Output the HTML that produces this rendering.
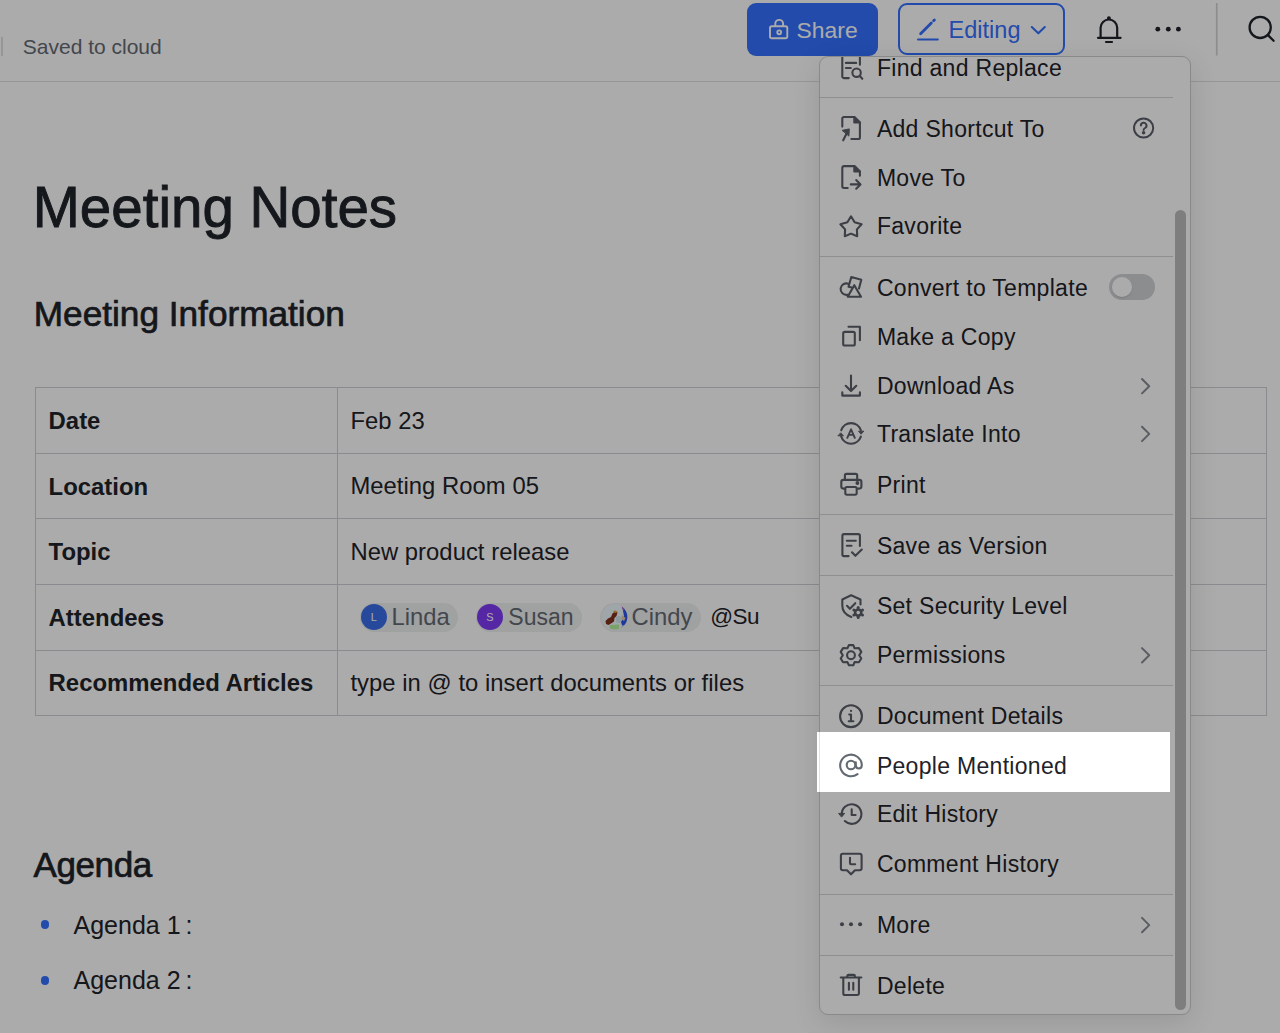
<!DOCTYPE html>
<html><head><meta charset="utf-8"><title>Meeting Notes</title>
<style>
html,body{margin:0;padding:0;width:1280px;height:1033px;overflow:hidden;background:#fff;}
body{position:relative;font-family:"Liberation Sans", sans-serif;}
.t{position:absolute;white-space:nowrap;}
.abs{position:absolute;}
svg{position:absolute;overflow:visible;}
</style></head><body>
<div class="abs" style="left:1px;top:37px;width:1.5px;height:19px;background:#dee0e3"></div>
<div class="t" style="left:22.80px;top:36.45px;font-size:21px;line-height:21px;color:#646a73;font-weight:normal;letter-spacing:0px;-webkit-text-stroke:0px #646a73;">Saved to cloud</div>
<div class="abs" style="left:0;top:80.7px;width:1280px;height:1px;background:#dee0e3"></div>
<div class="abs" style="left:747px;top:3px;width:131px;height:52.5px;border-radius:9px;background:#3370ff"></div>
<svg style="left:0;top:0" width="1280" height="60"><g fill="none" stroke="#fff" stroke-width="1.9">
<rect x="770" y="26.2" width="17.3" height="12.1" rx="1.8"/>
<path d="M775.3 26 V23.8 a3.9 3.9 0 0 1 7.8 0 V26"/>
<circle cx="779.2" cy="32.3" r="1.9"/>
</g></svg>
<div class="t" style="left:796.60px;top:19.04px;font-size:22.9px;line-height:22.9px;color:#fff;font-weight:normal;letter-spacing:0px;-webkit-text-stroke:0px #fff;">Share</div>
<div class="abs" style="left:898px;top:3px;width:166.5px;height:52px;border-radius:9px;border:2px solid #3370ff;box-sizing:border-box"></div>
<svg style="left:0;top:0" width="1280" height="60"><g fill="none" stroke="#3370ff" stroke-linecap="round">
<path d="M918 39.4 H937.8" stroke-width="2"/>
<path d="M920.6 33.8 L931.3 23.1" stroke-width="2.8"/>
<path d="M933.6 20.8 L934.4 20" stroke-width="2.8"/>
<path d="M1031.8 27 L1038.3 33.3 L1044.8 27" stroke-width="2.1" stroke-linejoin="round"/>
</g></svg>
<div class="t" style="left:948.60px;top:19.32px;font-size:23.5px;line-height:23.5px;color:#3370ff;font-weight:normal;letter-spacing:0px;-webkit-text-stroke:0px #3370ff;">Editing</div>
<svg style="left:0;top:0" width="1280" height="60"><g fill="none" stroke="#1f2329" stroke-width="2.2" stroke-linecap="round">
<path d="M1098 37.8 H1120.6"/>
<path d="M1100.6 37.5 V27.8 a8.3 8.3 0 0 1 16.6 0 V37.5"/>
<path d="M1106 42 H1112"/>
<circle cx="1108.9" cy="18.2" r="0.9" fill="#1f2329"/>
</g>
<g fill="#1f2329"><circle cx="1157.8" cy="29.2" r="2.4"/><circle cx="1168.3" cy="29.2" r="2.4"/><circle cx="1178.4" cy="29.2" r="2.4"/></g>
<rect x="1215.9" y="3" width="1.7" height="52.5" fill="#cfd2d6"/>
<g fill="none" stroke="#1f2329" stroke-width="2.3" stroke-linecap="round">
<circle cx="1260.2" cy="27.4" r="10.6"/><path d="M1268.2 35.4 L1273.6 40.8"/></g>
</svg>
<div class="t" style="left:32.80px;top:180.17px;font-size:56.5px;line-height:56.5px;color:#1f2329;font-weight:normal;letter-spacing:0px;-webkit-text-stroke:0.9px #1f2329;">Meeting Notes</div>
<div class="t" style="left:33.80px;top:296.28px;font-size:35.2px;line-height:35.2px;color:#1f2329;font-weight:normal;letter-spacing:0px;-webkit-text-stroke:0.7px #1f2329;">Meeting Information</div>
<div class="abs" style="left:34.5px;top:387.0px;width:1232.1px;height:329.29999999999995px;border:1px solid #cdd0d4;box-sizing:border-box"></div>
<div class="abs" style="left:34.5px;top:452.66px;width:1232.1px;height:1px;background:#cdd0d4"></div>
<div class="abs" style="left:34.5px;top:518.32px;width:1232.1px;height:1px;background:#cdd0d4"></div>
<div class="abs" style="left:34.5px;top:583.98px;width:1232.1px;height:1px;background:#cdd0d4"></div>
<div class="abs" style="left:34.5px;top:649.64px;width:1232.1px;height:1px;background:#cdd0d4"></div>
<div class="abs" style="left:336.6px;top:387.0px;width:1px;height:329.29999999999995px;background:#cdd0d4"></div>
<div class="t" style="left:48.60px;top:409.08px;font-size:23.9px;line-height:23.9px;color:#1f2329;font-weight:bold;letter-spacing:0px;-webkit-text-stroke:0px #1f2329;">Date</div>
<div class="t" style="left:350.40px;top:408.77px;font-size:23.8px;line-height:23.8px;color:#1f2329;font-weight:normal;letter-spacing:0.05px;-webkit-text-stroke:0px #1f2329;">Feb 23</div>
<div class="t" style="left:48.60px;top:474.69px;font-size:23.9px;line-height:23.9px;color:#1f2329;font-weight:bold;letter-spacing:0px;-webkit-text-stroke:0px #1f2329;">Location</div>
<div class="t" style="left:350.40px;top:474.37px;font-size:23.8px;line-height:23.8px;color:#1f2329;font-weight:normal;letter-spacing:0.05px;-webkit-text-stroke:0px #1f2329;">Meeting Room 05</div>
<div class="t" style="left:48.60px;top:540.28px;font-size:23.9px;line-height:23.9px;color:#1f2329;font-weight:bold;letter-spacing:0px;-webkit-text-stroke:0px #1f2329;">Topic</div>
<div class="t" style="left:350.40px;top:539.97px;font-size:23.8px;line-height:23.8px;color:#1f2329;font-weight:normal;letter-spacing:0.05px;-webkit-text-stroke:0px #1f2329;">New product release</div>
<div class="t" style="left:48.60px;top:605.88px;font-size:23.9px;line-height:23.9px;color:#1f2329;font-weight:bold;letter-spacing:0px;-webkit-text-stroke:0px #1f2329;">Attendees</div>
<div class="t" style="left:48.60px;top:671.48px;font-size:23.9px;line-height:23.9px;color:#1f2329;font-weight:bold;letter-spacing:0px;-webkit-text-stroke:0px #1f2329;">Recommended Articles</div>
<div class="t" style="left:350.40px;top:671.17px;font-size:23.8px;line-height:23.8px;color:#1f2329;font-weight:normal;letter-spacing:0.05px;-webkit-text-stroke:0px #1f2329;">type in @ to insert documents or files</div>
<div class="abs" style="left:360.3px;top:603px;width:98.09999999999997px;height:28.6px;border-radius:14.3px;background:#eff0f1"></div>
<div class="abs" style="left:360.9px;top:604.2px;width:26px;height:26px;border-radius:13px;background:#3a6ee8;color:#fff;font-size:11px;line-height:26px;text-align:center;font-family:"Liberation Sans", sans-serif">L</div>
<div class="t" style="left:391.60px;top:605.37px;font-size:23.8px;line-height:23.8px;color:#646a73;font-weight:normal;letter-spacing:0px;-webkit-text-stroke:0px #646a73;">Linda</div>
<div class="abs" style="left:476px;top:603px;width:105.60000000000002px;height:28.6px;border-radius:14.3px;background:#eff0f1"></div>
<div class="abs" style="left:477px;top:604.2px;width:26px;height:26px;border-radius:13px;background:#7f3bf5;color:#fff;font-size:11px;line-height:26px;text-align:center;font-family:"Liberation Sans", sans-serif">S</div>
<div class="t" style="left:508.30px;top:606.05px;font-size:23.0px;line-height:23.0px;color:#646a73;font-weight:normal;letter-spacing:0px;-webkit-text-stroke:0px #646a73;">Susan</div>
<div class="abs" style="left:599.8px;top:603px;width:101.60000000000002px;height:28.6px;border-radius:14.3px;background:#eff0f1"></div>
<div class="t" style="left:631.60px;top:605.37px;font-size:23.8px;line-height:23.8px;color:#646a73;font-weight:normal;letter-spacing:0px;-webkit-text-stroke:0px #646a73;">Cindy</div>
<svg style="left:601.7px;top:603.8px" width="26" height="26" viewBox="0 0 26 26">
<defs><clipPath id="cav"><circle cx="13" cy="13" r="12.4"/></clipPath></defs>
<circle cx="13" cy="13" r="13" fill="#f4f6f8"/>
<g clip-path="url(#cav)">
<rect width="26" height="26" fill="#eef8fc"/>
<path d="M20 2 C24 5 26 9 26 14 C26 19 24 23 21 25 L19 18 L22 12 Z" fill="#2e56e6"/>
<path d="M19.5 2.5 L23 4 L21.5 7 Z" fill="#d64fc0"/>
<path d="M7 26 L8 21 L17 20.5 L17.5 26 Z" fill="#b8f0a0"/>
<rect x="17.5" y="21.5" width="6" height="5" fill="#f2f6f7"/>
<circle cx="20.5" cy="24" r="1.2" fill="#2a3a4a"/>
<path d="M3.5 17 L6 14.5 L9 13 L10.5 9.5 L13 7.5 L15.5 8.5 L14.5 12 L12.5 14 L12 17.5 L9 19.5 L6.5 21 L4 20 Z" fill="#80301c"/>
<path d="M11 7.5 C12 6 14.5 6 15.5 8 L13 9 Z" fill="#e0a845"/>
<path d="M20 11 L23.5 14 L22 17 L19 15 Z" fill="#e9c9a8"/>
<rect x="14" y="12" width="5" height="7" rx="2" fill="#d0e6ee"/>
</g></svg>
<div class="t" style="left:710.30px;top:606.48px;font-size:22.5px;line-height:22.5px;color:#1f2329;font-weight:normal;letter-spacing:-0.6px;-webkit-text-stroke:0px #1f2329;">@Su</div>
<div class="t" style="left:33.50px;top:846.75px;font-size:35px;line-height:35px;color:#1f2329;font-weight:normal;letter-spacing:-0.4px;-webkit-text-stroke:0.7px #1f2329;">Agenda</div>
<div class="abs" style="left:40.80px;top:920.40px;width:8.6px;height:8.6px;border-radius:50%;background:#3370ff"></div>
<div class="abs" style="left:40.80px;top:976.30px;width:8.6px;height:8.6px;border-radius:50%;background:#3370ff"></div>
<div class="t" style="left:73.50px;top:912.55px;font-size:25px;line-height:25px;color:#1f2329;font-weight:normal;letter-spacing:0px;-webkit-text-stroke:0px #1f2329;">Agenda 1<span style='margin-left:5px'>:</span></div>
<div class="t" style="left:73.50px;top:968.45px;font-size:25px;line-height:25px;color:#1f2329;font-weight:normal;letter-spacing:0px;-webkit-text-stroke:0px #1f2329;">Agenda 2<span style='margin-left:5px'>:</span></div>
<div class="abs" style="left:819px;top:56.2px;width:372px;height:958.4px;border:1px solid #c9ccd0;border-radius:9px;background:#fff;box-sizing:border-box;box-shadow:0 8px 28px rgba(31,35,41,0.12);overflow:hidden">
<div id="menuin" class="abs" style="left:-820px;top:-57.2px;width:1280px;height:1033px">
<div class="abs" style="left:819px;top:96.80px;width:354px;height:1px;background:#d2d5d9"></div>
<div class="abs" style="left:819px;top:256.30px;width:354px;height:1px;background:#d2d5d9"></div>
<div class="abs" style="left:819px;top:514.00px;width:354px;height:1px;background:#d2d5d9"></div>
<div class="abs" style="left:819px;top:575.00px;width:354px;height:1px;background:#d2d5d9"></div>
<div class="abs" style="left:819px;top:685.10px;width:354px;height:1px;background:#d2d5d9"></div>
<div class="abs" style="left:819px;top:893.90px;width:354px;height:1px;background:#d2d5d9"></div>
<div class="abs" style="left:819px;top:954.50px;width:354px;height:1px;background:#d2d5d9"></div>
<svg style="left:832px;top:52px" width="40" height="40" viewBox="0 0 40 40"><g fill="none" stroke="#5a5f67" stroke-width="2.1" stroke-linecap="round" stroke-linejoin="round"><path d="M10.3 4 V24.5 a1.6 1.6 0 0 0 1.6 1.6 H16.8"/><path d="M13.9 10.9 H24.2 M13.9 16 H18.8 M27.9 5 V12.8"/><circle cx="24.6" cy="20.7" r="4.2"/><path d="M27.8 24 L30.3 26.8"/></g></svg>
<div class="t" style="left:876.90px;top:56.75px;font-size:23px;line-height:23px;color:#1f2329;font-weight:normal;letter-spacing:0.3px;-webkit-text-stroke:0px #1f2329;">Find and Replace</div>
<svg style="left:832px;top:108px" width="40" height="40" viewBox="0 0 40 40"><g fill="none" stroke="#5a5f67" stroke-width="2.1" stroke-linecap="round" stroke-linejoin="round"><path d="M10.3 18.6 V10.6 a1.6 1.6 0 0 1 1.6-1.6 H22.3 L27.9 14.5 V29.4 a1.6 1.6 0 0 1 -1.6 1.6 H19.4"/><path d="M22.3 9 V14.5 H27.9 Z" fill="#5a5f67"/><path d="M11.2 32.3 L15.2 24.2"/><path d="M10.5 22.3 L17.3 20.9 L16.9 27.7 Z" fill="#5a5f67" stroke-width="1"/></g></svg>
<div class="t" style="left:876.90px;top:117.65px;font-size:23px;line-height:23px;color:#1f2329;font-weight:normal;letter-spacing:0.3px;-webkit-text-stroke:0px #1f2329;">Add Shortcut To</div>
<svg style="left:832px;top:158px" width="40" height="40" viewBox="0 0 40 40"><g fill="none" stroke="#5a5f67" stroke-width="2.1" stroke-linecap="round" stroke-linejoin="round"><path d="M15.7 30 H12 a1.7 1.7 0 0 1 -1.7-1.7 V9.8 a1.7 1.7 0 0 1 1.7-1.7 H22.3 L27.9 13.5 V17.8"/><path d="M22.3 8.1 V13.5 H27.9 Z" fill="#5a5f67"/><path d="M18.8 26.4 H28.3 M24.2 22.1 L28.5 26.4 L24.2 30.7"/></g></svg>
<div class="t" style="left:876.90px;top:166.95px;font-size:23px;line-height:23px;color:#1f2329;font-weight:normal;letter-spacing:0.3px;-webkit-text-stroke:0px #1f2329;">Move To</div>
<svg style="left:832px;top:206px" width="40" height="40" viewBox="0 0 40 40"><g fill="none" stroke="#5a5f67" stroke-width="2.1" stroke-linecap="round" stroke-linejoin="round"><path d="M19 10.3 L22.6 16.2 L29.6 18.2 L24.9 23.4 L25.2 30.2 L19 27.6 L12.8 30.2 L13.1 23.4 L8.4 18.2 L15.4 16.2 Z"/></g></svg>
<div class="t" style="left:876.90px;top:215.45px;font-size:23px;line-height:23px;color:#1f2329;font-weight:normal;letter-spacing:0.3px;-webkit-text-stroke:0px #1f2329;">Favorite</div>
<svg style="left:832px;top:267px" width="40" height="40" viewBox="0 0 40 40"><g fill="none" stroke="#5a5f67" stroke-width="2.1" stroke-linecap="round" stroke-linejoin="round"><path d="M16.6 16.9 A5.7 5.7 0 1 0 15.4 27.7"/><path d="M19.8 20.6 L16.5 19.8 L19.3 10.1 L29.3 12.8 L27 21.6"/><path d="M22.3 18.2 L29 29.8 H15.7 Z"/></g></svg>
<div class="t" style="left:876.90px;top:276.95px;font-size:23px;line-height:23px;color:#1f2329;font-weight:normal;letter-spacing:0.3px;-webkit-text-stroke:0px #1f2329;">Convert to Template</div>
<svg style="left:832px;top:317px" width="40" height="40" viewBox="0 0 40 40"><g fill="none" stroke="#5a5f67" stroke-width="2.1" stroke-linecap="round" stroke-linejoin="round"><rect x="11.2" y="14.9" width="11.6" height="13.6" rx="1.6"/><path d="M16.5 9.8 H27.9 V23.3"/></g></svg>
<div class="t" style="left:876.90px;top:326.35px;font-size:23px;line-height:23px;color:#1f2329;font-weight:normal;letter-spacing:0.3px;-webkit-text-stroke:0px #1f2329;">Make a Copy</div>
<svg style="left:832px;top:370px" width="40" height="40" viewBox="0 0 40 40"><g fill="none" stroke="#5a5f67" stroke-width="2.1" stroke-linecap="round" stroke-linejoin="round"><path d="M19 5.5 V20.8 M13.7 15.8 L19 21.1 L24.3 15.8"/><path d="M10.3 22.4 V25.6 H27.9 V22.4"/></g></svg>
<div class="t" style="left:876.90px;top:375.25px;font-size:23px;line-height:23px;color:#1f2329;font-weight:normal;letter-spacing:0.3px;-webkit-text-stroke:0px #1f2329;">Download As</div>
<svg style="left:832px;top:418px" width="40" height="40" viewBox="0 0 40 40"><g fill="none" stroke="#5a5f67" stroke-width="2.1" stroke-linecap="round" stroke-linejoin="round"><path d="M9.25 12.3 A10.3 10.3 0 0 1 28.85 12.3"/><path d="M28.85 18.6 A10.3 10.3 0 0 1 9.25 18.6"/><path d="M26.9 13.2 L31.8 13.2 L29.3 15.9 Z" fill="#5a5f67" stroke-width="1"/><path d="M6.3 17.8 L11.4 17.8 L8.9 15.1 Z" fill="#5a5f67" stroke-width="1"/><path d="M15.3 19.8 L19.05 11.3 L22.8 19.8 M16.6 16.9 H21.5" stroke-width="1.9"/></g></svg>
<div class="t" style="left:876.90px;top:422.95px;font-size:23px;line-height:23px;color:#1f2329;font-weight:normal;letter-spacing:0.3px;-webkit-text-stroke:0px #1f2329;">Translate Into</div>
<svg style="left:832px;top:464px" width="40" height="40" viewBox="0 0 40 40"><g fill="none" stroke="#5a5f67" stroke-width="2.1" stroke-linecap="round" stroke-linejoin="round"><path d="M12.9 15.6 V11.5 a1.6 1.6 0 0 1 1.6-1.6 H23.6 a1.6 1.6 0 0 1 1.6 1.6 V15.6"/><path d="M12.7 24.6 H11.3 a2 2 0 0 1 -2-2 V17.9 a2 2 0 0 1 2-2 H27.4 a2 2 0 0 1 2 2 V22.6 a2 2 0 0 1 -2 2 H25.9"/><rect x="13.3" y="23" width="11.4" height="7.7" rx="1.6"/><circle cx="25.4" cy="19" r="0.9" fill="#5a5f67"/></g></svg>
<div class="t" style="left:876.90px;top:473.75px;font-size:23px;line-height:23px;color:#1f2329;font-weight:normal;letter-spacing:0.3px;-webkit-text-stroke:0px #1f2329;">Print</div>
<svg style="left:832px;top:525px" width="40" height="40" viewBox="0 0 40 40"><g fill="none" stroke="#5a5f67" stroke-width="2.1" stroke-linecap="round" stroke-linejoin="round"><path d="M16.6 31.1 H12 a1.6 1.6 0 0 1 -1.6-1.6 V10.7 a1.6 1.6 0 0 1 1.6-1.6 H26.3 a1.6 1.6 0 0 1 1.6 1.6 V20.9"/><path d="M14.8 15.8 H23.8 M14.8 20.8 H19.5"/><path d="M20 27.3 L23.4 30.8 L29.8 24.5"/></g></svg>
<div class="t" style="left:876.90px;top:534.75px;font-size:23px;line-height:23px;color:#1f2329;font-weight:normal;letter-spacing:0.3px;-webkit-text-stroke:0px #1f2329;">Save as Version</div>
<svg style="left:832px;top:586px" width="40" height="40" viewBox="0 0 40 40"><g fill="none" stroke="#5a5f67" stroke-width="2.1" stroke-linecap="round" stroke-linejoin="round"><path d="M19.3 31 C14.2 29 10.3 24.8 10.3 19.5 V13.5 L19.1 9.3 L28.5 13.5 V18.5"/><path d="M15 19.8 L17.9 22.8 L23.3 17.2"/><circle cx="26.2" cy="26.6" r="3.1" stroke-width="2.6"/><g fill="#5a5f67" stroke="none"><circle cx="26.2" cy="21.6" r="1.5"/><circle cx="30.5" cy="24.1" r="1.5"/><circle cx="30.5" cy="29.1" r="1.5"/><circle cx="26.2" cy="31.6" r="1.5"/><circle cx="21.9" cy="29.1" r="1.5"/><circle cx="21.9" cy="24.1" r="1.5"/></g></g></svg>
<div class="t" style="left:876.90px;top:594.75px;font-size:23px;line-height:23px;color:#1f2329;font-weight:normal;letter-spacing:0.3px;-webkit-text-stroke:0px #1f2329;">Set Security Level</div>
<svg style="left:832px;top:635px" width="40" height="40" viewBox="0 0 40 40"><g fill="none" stroke="#5a5f67" stroke-width="2.1" stroke-linecap="round" stroke-linejoin="round"><path d="M16.9 10.1 H21.3 L22.6 13.3 L26.9 13.1 L29.3 16.9 L27.2 20.2 L29.3 23.5 L26.9 27.3 L22.6 27.1 L21.3 30.3 H16.9 L15.4 27.1 L11.1 27.3 L8.7 23.5 L10.8 20.2 L8.7 16.9 L11.1 13.1 L15.4 13.3 Z"/><circle cx="19" cy="20.2" r="3.9"/></g></svg>
<div class="t" style="left:876.90px;top:644.35px;font-size:23px;line-height:23px;color:#1f2329;font-weight:normal;letter-spacing:0.3px;-webkit-text-stroke:0px #1f2329;">Permissions</div>
<svg style="left:832px;top:696px" width="40" height="40" viewBox="0 0 40 40"><g fill="none" stroke="#5a5f67" stroke-width="2.1" stroke-linecap="round" stroke-linejoin="round"><circle cx="19" cy="20.2" r="10.9"/><circle cx="19" cy="14.9" r="1.1" fill="#5a5f67" stroke="none"/><path d="M17.2 18.5 H19 V25.3 M16.7 25.3 H21.4"/></g></svg>
<div class="t" style="left:876.90px;top:705.35px;font-size:23px;line-height:23px;color:#1f2329;font-weight:normal;letter-spacing:0.3px;-webkit-text-stroke:0px #1f2329;">Document Details</div>
<svg style="left:832px;top:794px" width="40" height="40" viewBox="0 0 40 40"><g fill="none" stroke="#5a5f67" stroke-width="2.1" stroke-linecap="round" stroke-linejoin="round"><path d="M12.8 27.1 A9.8 9.8 0 1 0 9.8 20.5"/><path d="M7 19.4 H12.6 L9.8 22.8 Z" fill="#5a5f67" stroke-width="1"/><path d="M19.7 15.3 V21 H23.6"/></g></svg>
<div class="t" style="left:876.90px;top:803.15px;font-size:23px;line-height:23px;color:#1f2329;font-weight:normal;letter-spacing:0.3px;-webkit-text-stroke:0px #1f2329;">Edit History</div>
<svg style="left:832px;top:844px" width="40" height="40" viewBox="0 0 40 40"><g fill="none" stroke="#5a5f67" stroke-width="2.1" stroke-linecap="round" stroke-linejoin="round"><path d="M10.9 9.7 H27.6 a2 2 0 0 1 2 2 V24.2 a2 2 0 0 1 -2 2 H23 L19 30.3 L15 26.2 H10.9 a2 2 0 0 1 -2-2 V11.7 a2 2 0 0 1 2-2 Z"/><path d="M18 13.7 V19.2 a1 1 0 0 0 1 1 H23.2"/></g></svg>
<div class="t" style="left:876.90px;top:853.15px;font-size:23px;line-height:23px;color:#1f2329;font-weight:normal;letter-spacing:0.3px;-webkit-text-stroke:0px #1f2329;">Comment History</div>
<svg style="left:832px;top:905px" width="40" height="40" viewBox="0 0 40 40"><g fill="none" stroke="#5a5f67" stroke-width="2.1" stroke-linecap="round" stroke-linejoin="round"><g fill="#5a5f67" stroke="none"><circle cx="10" cy="19.3" r="2"/><circle cx="19" cy="19.3" r="2"/><circle cx="28.1" cy="19.3" r="2"/></g></g></svg>
<div class="t" style="left:876.90px;top:914.15px;font-size:23px;line-height:23px;color:#1f2329;font-weight:normal;letter-spacing:0.3px;-webkit-text-stroke:0px #1f2329;">More</div>
<svg style="left:832px;top:965px" width="40" height="40" viewBox="0 0 40 40"><g fill="none" stroke="#5a5f67" stroke-width="2.1" stroke-linecap="round" stroke-linejoin="round"><path d="M8.7 12.5 H29.3"/><path d="M15.3 12 V10.9 a1 1 0 0 1 1-1 H21.9 a1 1 0 0 1 1 1 V12" /><path d="M11.3 13 V28.5 a1.5 1.5 0 0 0 1.5 1.5 H25.4 a1.5 1.5 0 0 0 1.5-1.5 V13"/><path d="M16.9 17.8 V24.8 M21.3 17.8 V24.8"/></g></svg>
<div class="t" style="left:876.90px;top:974.75px;font-size:23px;line-height:23px;color:#1f2329;font-weight:normal;letter-spacing:0.3px;-webkit-text-stroke:0px #1f2329;">Delete</div>
<svg style="left:0;top:0" width="1280" height="1033"><path d="M1142 379.0 L1149.2 386.2 L1142 393.4" fill="none" stroke="#868b94" stroke-width="2" stroke-linecap="round" stroke-linejoin="round"/></svg>
<svg style="left:0;top:0" width="1280" height="1033"><path d="M1142 426.7 L1149.2 433.9 L1142 441.1" fill="none" stroke="#868b94" stroke-width="2" stroke-linecap="round" stroke-linejoin="round"/></svg>
<svg style="left:0;top:0" width="1280" height="1033"><path d="M1142 648.1 L1149.2 655.3 L1142 662.5" fill="none" stroke="#868b94" stroke-width="2" stroke-linecap="round" stroke-linejoin="round"/></svg>
<svg style="left:0;top:0" width="1280" height="1033"><path d="M1142 917.9 L1149.2 925.1 L1142 932.3" fill="none" stroke="#868b94" stroke-width="2" stroke-linecap="round" stroke-linejoin="round"/></svg>
<svg style="left:1123px;top:108px" width="40" height="40" viewBox="0 0 40 40"><g fill="none" stroke="#5a5f67" stroke-width="2" stroke-linecap="round">
<circle cx="20.6" cy="20" r="9.6"/><path d="M17.9 17.6 a2.8 2.8 0 1 1 4.2 2.4 c-1 0.6 -1.5 1.1 -1.5 2.1"/><circle cx="20.6" cy="24.8" r="0.8" fill="#5a5f67"/></g></svg>
<div class="abs" style="left:1109.3px;top:274.1px;width:45.4px;height:26.3px;border-radius:13.2px;background:#cfd2d6"></div>
<div class="abs" style="left:1112.3px;top:277.4px;width:19.7px;height:19.7px;border-radius:50%;background:#fff;box-shadow:0 1px 2px rgba(0,0,0,0.12)"></div>
<div class="abs" style="left:1175px;top:210px;width:11.2px;height:800px;border-radius:5.6px;background:#bdbdbd"></div>
</div></div>
<div class="abs" style="left:0;top:0;width:1280px;height:1033px;background:rgba(0,0,0,0.33)"></div>
<div class="abs" style="left:817px;top:732.3px;width:353px;height:59.9px;background:#fff"></div>
<div class="abs" style="left:818.8px;top:732.3px;width:1.5px;height:59.9px;background:#dfe1e5"></div>
<svg style="left:832px;top:745px" width="40" height="40" viewBox="0 0 40 40"><g fill="none" stroke="#646a73" stroke-width="2.1" stroke-linecap="round" stroke-linejoin="round"><path d="M25.5 29.1 A10.8 10.8 0 1 1 29.8 20.3 C29.8 22.3 28.5 23.5 26.8 23.5 C25 23.5 23.8 22.2 23.8 20.3 V17.3"/><circle cx="19" cy="20" r="4.3"/></g></svg>
<div class="t" style="left:876.90px;top:754.75px;font-size:23px;line-height:23px;color:#1f2329;font-weight:normal;letter-spacing:0.3px;-webkit-text-stroke:0px #1f2329;">People Mentioned</div>
</body></html>
